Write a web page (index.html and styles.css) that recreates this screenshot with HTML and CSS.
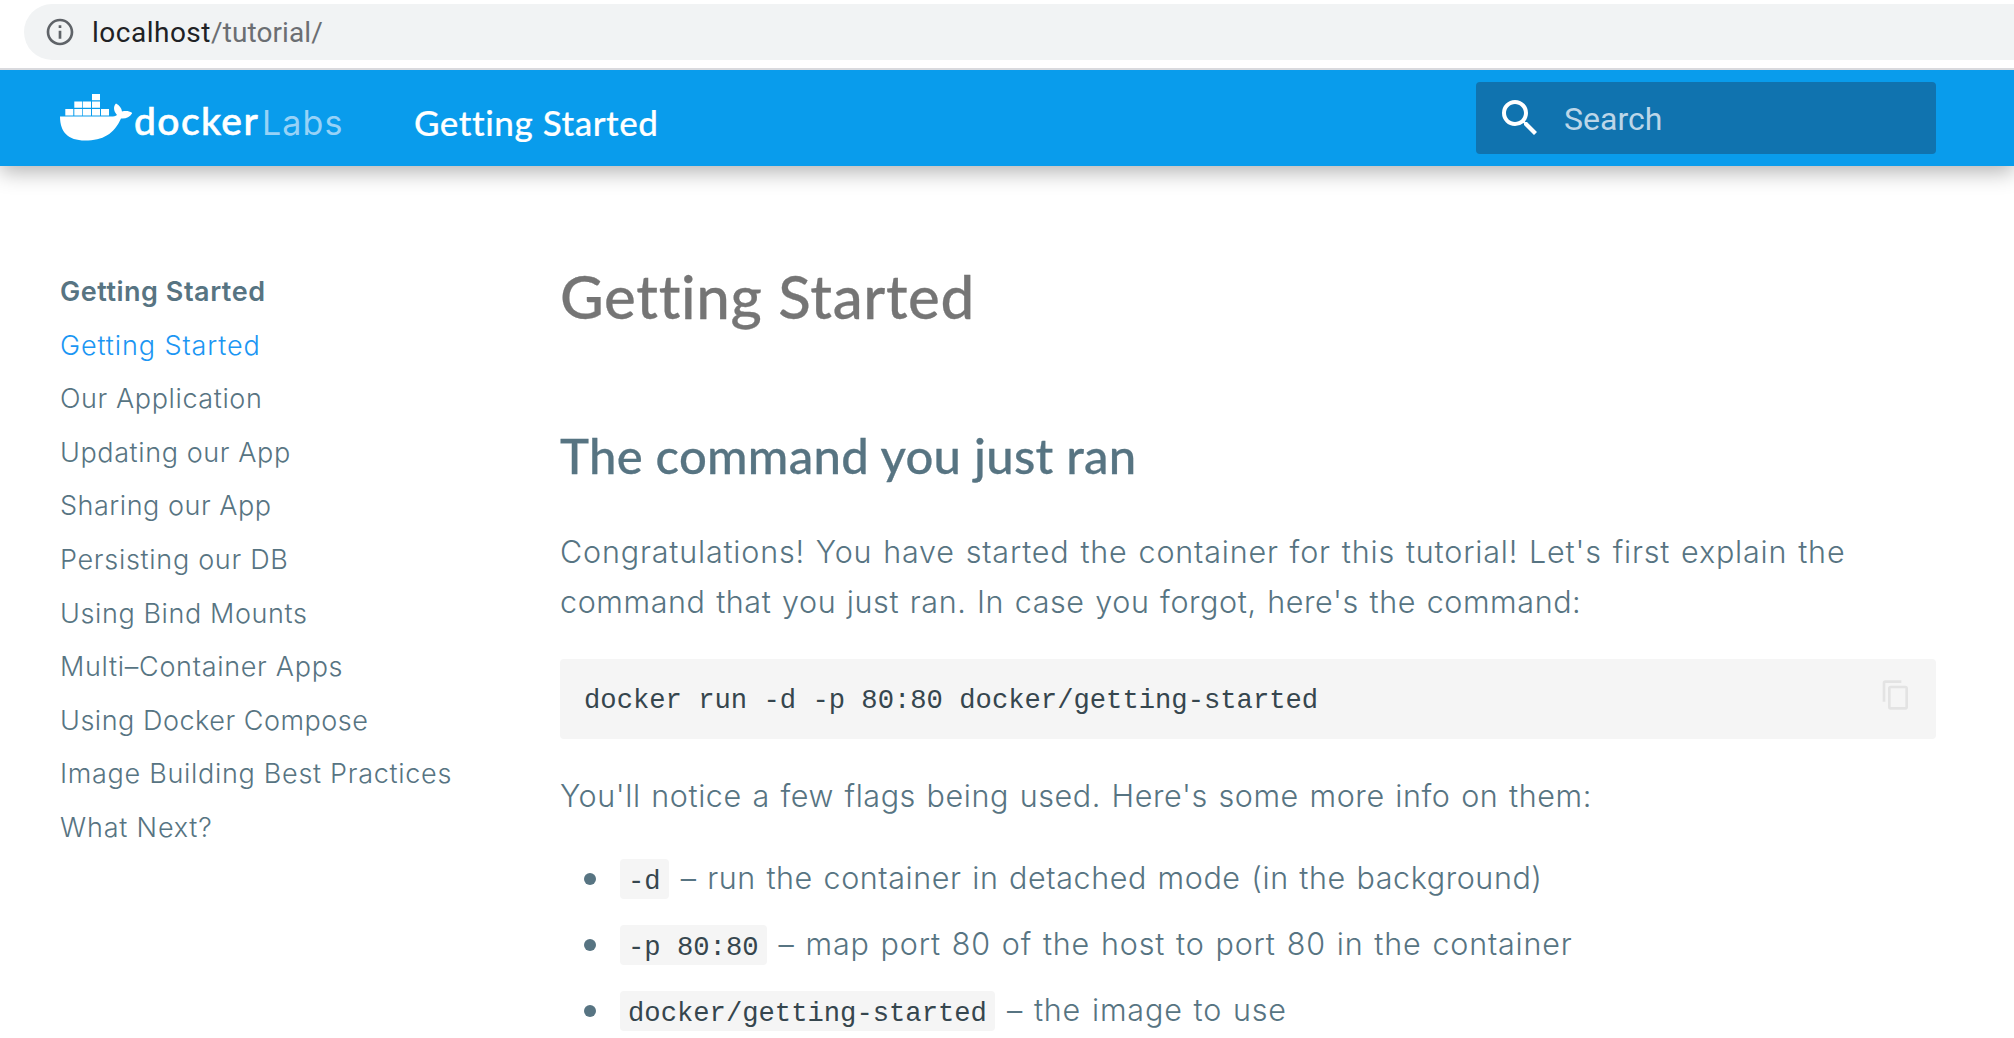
FILE: index.html
```html
<!DOCTYPE html>
<html lang="en">
<head>
<meta charset="utf-8">
<title>Getting Started</title>
<link rel="stylesheet" href="styles.css">
</head>
<body>
<div class="browser-bar">
  <div class="address">
    <svg class="info-icon" viewBox="0 0 24 24"><path d="M11 7h2v2h-2zm0 4h2v6h-2zm1-9C6.480 2 2 6.480 2 12s4.480 10 10 10 10-4.480 10-10S17.520 2 12 2zm0 18c-4.410 0-8-3.590-8-8s3.590-8 8-8 8 3.590 8 8-3.590 8-8 8z"/></svg>
    <span class="url"><span class="host">localhost</span>/tutorial/</span>
  </div>
</div>
<header class="header">
  <a class="logo">
    <svg class="whale" viewBox="0 0 72 47"><path d="M0 22.500H51.500C53.500 22.500 55.500 22 57 21 53.500 17.500 53 12.500 56 9.500 59.500 11.500 61.500 14 62 17.500 66 16.500 69.500 17 72.300 19 70 23 66 25 61 24.500 54 40 43 46.500 25 46.500 8 46.500 0 38 0 22.500Z"/><path d="M5.300 15h8v6.500h-8zM14.300 15h8v6.500h-8zM23 15h8v6.500h-8zM32 15h8v6.500h-8zM41 15h8v6.500h-8zM14.300 7.500h8v6.300h-8zM23 7.500h8v6.300h-8zM32 7.500h8v6.300h-8zM32 0h8v6.200h-8z"/></svg>
    <span class="wordmark">docker</span><span class="labs">Labs</span>
  </a>
  <div class="header-title">Getting Started</div>
  <div class="search">
    <svg class="search-icon" viewBox="0 0 24 24"><path d="M9.500 3A6.500 6.500 0 0 1 16 9.500c0 1.610-.590 3.090-1.560 4.230l.270.270h.790l5 5-1.500 1.500-5-5v-.790l-.270-.270A6.516 6.516 0 0 1 9.500 16 6.500 6.500 0 0 1 3 9.500 6.500 6.500 0 0 1 9.500 3m0 2C7 5 5 7 5 9.500S7 14 9.500 14 14 12 14 9.500 12 5 9.500 5z"/></svg>
    <span class="search-label">Search</span>
  </div>
</header>
<div class="layout">
  <nav class="nav">
    <span class="nav-title">Getting Started</span>
    <a class="active">Getting Started</a>
    <a>Our Application</a>
    <a>Updating our App</a>
    <a class="snug">Sharing our App</a>
    <a class="loose">Persisting our DB</a>
    <a>Using Bind Mounts</a>
    <a class="loose">Multi–Container Apps</a>
    <a class="snug">Using Docker Compose</a>
    <a class="loose">Image Building Best Practices</a>
    <a class="wide">What Next?</a>
  </nav>
  <main class="content">
    <h1>Getting Started</h1>
    <h2>The command you just ran</h2>
    <p><span class="wide">Congratulations! You have started the container for this tutorial! Let's first explain the</span><br>command that you just ran. In case you forgot, here's the command:</p>
    <div class="code-block">
      <code>docker run -d -p 80:80 docker/getting-started</code>
      <svg class="copy-icon" viewBox="0 0 24 24"><path d="M19 21H8V7h11m0-2H8a2 2 0 0 0-2 2v14a2 2 0 0 0 2 2h11a2 2 0 0 0 2-2V7a2 2 0 0 0-2-2m-3-4H4a2 2 0 0 0-2 2v14h2V3h12V1z"/></svg>
    </div>
    <p>You'll notice a few flags being used. Here's some more info on them:</p>
    <ul>
      <li><code>-d</code><span>– run the container in detached mode (in the background)</span></li>
      <li><code>-p 80:80</code><span class="wide">– map port 80 of the host to port 80 in the container</span></li>
      <li><code>docker/getting-started</code><span class="wide">– the image to use</span></li>
    </ul>
  </main>
</div>
</body>
</html>
```
FILE: styles.css
```css
* { box-sizing: border-box; }
body {
  margin: 0;
  height: 1038px;
  overflow: hidden;
  background: #fff;
  color: #577482;
  font-family: Inter, "Liberation Sans", sans-serif;
  font-weight: 350;
  font-variant-ligatures: none;
}

/* Address bar */
.browser-bar { height: 70px; padding: 4px 0 0 24px; border-bottom: 2px solid #d9dade; }
.address {
  display: flex;
  align-items: center;
  height: 56px;
  padding-left: 20px;
  border-radius: 28px 0 0 28px;
  background: #f1f3f4;
}
.info-icon { width: 32px; height: 32px; fill: #5f6368; }
.url { padding-top: 1px; margin-left: 16px; font: 400 28px/56px Roboto, sans-serif; letter-spacing: .1px; color: #6b6e72; white-space: nowrap; }
.host { color: #202124; letter-spacing: .5px; }

/* Site header */
.header {
  position: relative;
  display: flex;
  align-items: center;
  height: 96px;
  padding: 0 78px 0 60px;
  background: #099cec;
  color: #fff;
  box-shadow: 0 6px 20px rgba(0, 0, 0, .3);
  clip-path: inset(0 0 -40px 0);
}
.logo { display: flex; align-items: center; width: 354px; height: 96px; }
.whale { width: 72px; height: 47px; margin-bottom: 2px; fill: #fff; flex: none; }
.wordmark { width: 127px; margin-left: 2px; padding-top: 3px; font: 500 39px/48px Lato, sans-serif; letter-spacing: 1.4px; -webkit-text-stroke: .6px #fff; }
.labs { margin-left: 1px; padding-top: 9px; font: 400 34px/48px Inter, sans-serif; letter-spacing: 1.1px; color: #97d2f7; }
.header-title { flex: 1; padding-top: 8px; font: 500 35px/88px Lato, sans-serif; letter-spacing: .55px; -webkit-text-stroke: .2px #fff; }
.search {
  display: flex;
  align-items: center;
  width: 460px;
  height: 72px;
  padding-left: 20px;
  border-radius: 4px;
  background: #1073af;
  color: #bcd6e8;
  font: 400 32px/72px Roboto, sans-serif;
}
.search-label { padding-top: 1px; }
.search-icon { width: 48px; height: 48px; margin-right: 20px; fill: #fff; }

/* Navigation */
.layout { display: flex; }
.nav { display: flex; flex-direction: column; width: 500px; padding: 99px 0 0 60px; font-size: 27px; line-height: 53.6px; letter-spacing: .6px; }
.nav-title { font-weight: 600; letter-spacing: .52px; }
.nav .active { color: #1b96f3; letter-spacing: .9px; }
.nav .snug { letter-spacing: .52px; }
.nav .loose { letter-spacing: .7px; }
.wide { letter-spacing: .82px; }

/* Article */
.content { width: 1436px; padding: 94px 0 0 60px; }
h1 { margin: 0; font: 500 60px/72px Lato, sans-serif; letter-spacing: .66px; color: #757575; -webkit-text-stroke: .3px #757575; }
h2 { margin: 93px 0 42px; font: 500 49px/60px Lato, sans-serif; letter-spacing: .3px; -webkit-text-stroke: .3px #577482; }
p, li { font-size: 30.5px; line-height: 50px; letter-spacing: .58px; word-spacing: 1.5px; white-space: nowrap; }
p { margin: 0; }
code { font: 400 27.2px "Liberation Mono", monospace; letter-spacing: 0; word-spacing: 0; color: #36464e; white-space: pre; }
.code-block { display: flex; justify-content: space-between; height: 80px; margin: 32px 0; padding: 20px 24px; border-radius: 4px; background: #f5f5f5; }
.code-block code { padding-top: 6px; }
.copy-icon { width: 32px; height: 32px; fill: #e3e3e3; }
ul { margin: 32px 0 0; padding: 0 0 0 60px; list-style: none; }
li { display: flex; align-items: baseline; margin-bottom: 16px; }
li::before { content: ""; align-self: center; width: 12px; height: 12px; margin: 2px 24px 0 -36px; border-radius: 50%; background: #577482; }
li code { margin-right: 12px; padding: 7px 8px 2px; border-radius: 4px; background: #f5f5f5; }
```
